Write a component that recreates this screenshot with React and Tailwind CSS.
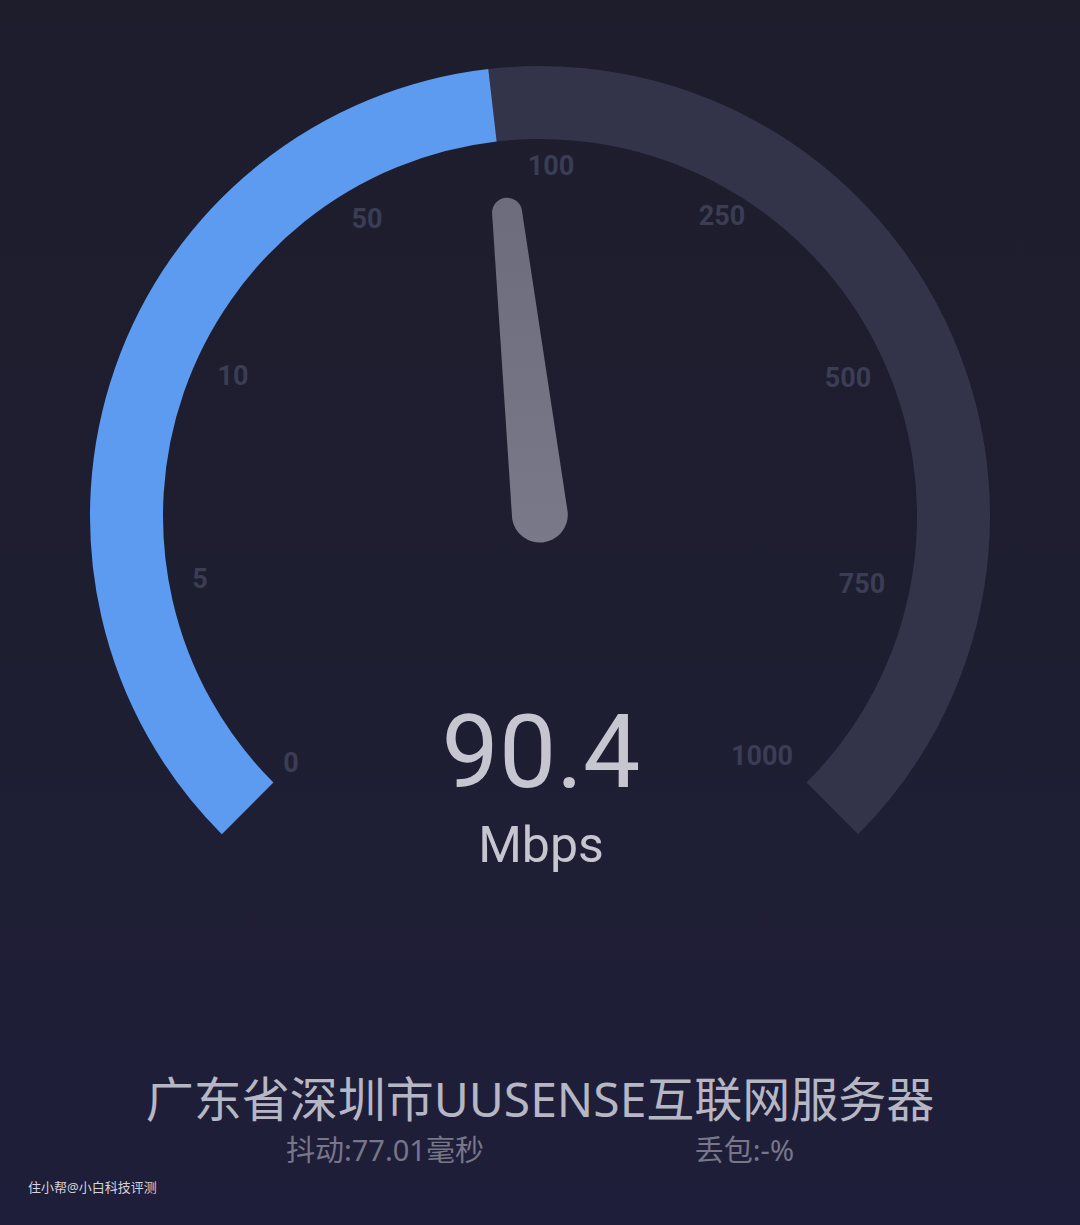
import React from 'react';

const CX = 540;
const CY = 516;
const R = 413.5;

// angle measured from 12 o'clock, clockwise, in degrees
const pt = (deg) => {
  const a = (deg * Math.PI) / 180;
  return [CX + R * Math.sin(a), CY - R * Math.cos(a)];
};

const arc = (from, to) => {
  const [x1, y1] = pt(from);
  const [x2, y2] = pt(to);
  const large = to - from > 180 ? 1 : 0;
  return `M${x1} ${y1} A${R} ${R} 0 ${large} 1 ${x2} ${y2}`;
};

const labels = [
  { t: '0', x: 291, y: 772 },
  { t: '5', x: 200, y: 588 },
  { t: '10', x: 233, y: 385 },
  { t: '50', x: 367, y: 228 },
  { t: '100', x: 551, y: 175 },
  { t: '250', x: 722, y: 225 },
  { t: '500', x: 848, y: 387 },
  { t: '750', x: 862, y: 593 },
  { t: '1000', x: 762, y: 765 },
];

function Gauge() {
  return (
    <svg width="1080" height="900" viewBox="0 0 1080 900" className="block">
      <defs>
        <linearGradient id="needle" x1="0" y1="0" x2="0" y2="1">
          <stop offset="0" stopColor="#6c6c7c" />
          <stop offset="1" stopColor="#797989" />
        </linearGradient>
      </defs>
      {/* track */}
      <path d={arc(-6.6, 135)} fill="none" stroke="#33344a" strokeWidth="73" />
      {/* progress */}
      <path d={arc(-135, -6.6)} fill="none" stroke="#5d9bf0" strokeWidth="73" />

      {labels.map((l) => (
        <text
          key={l.t}
          x={l.x}
          y={l.y}
          textAnchor="middle"
          fill="#3b3d54"
          fontSize="27"
          fontWeight="700"
          fontFamily="Roboto, 'Liberation Sans', sans-serif"
        >
          {l.t}
        </text>
      ))}

      {/* needle */}
      <path
        d="M567.8 513 L521.9 210.4 A15 15 0 0 0 492.1 213.6 L512.2 519 A28 28 0 0 0 567.8 513 Z"
        fill="url(#needle)"
      />

      <text
        x="541"
        y="787"
        textAnchor="middle"
        fill="#c6c6d0"
        fontSize="102"
        fontFamily="Roboto, 'Noto Sans', sans-serif"
      >
        90.4
      </text>
      <text
        x="541"
        y="862"
        textAnchor="middle"
        fill="#c6c6d0"
        fontSize="50"
        fontFamily="Roboto, 'Noto Sans', sans-serif"
      >
        Mbps
      </text>
    </svg>
  );
}

export default function App() {
  const cjk = { fontFamily: "'Noto Sans', 'Noto Sans CJK SC', sans-serif" };

  return (
    <div className="w-[1080px] h-[1225px] overflow-hidden flex flex-col bg-gradient-to-b from-[#1d1d2c] via-[#1e1e31] to-[#1f1e3a]">
      <Gauge />

      {/* server info */}
      <div className="flex flex-col items-center pt-[170px]" style={cjk}>
        <h2 className="text-[48px] leading-[58px] text-[#b6b6c4] whitespace-nowrap">
          广东省深圳市UUSENSE互联网服务器
        </h2>
        <div className="w-[508px] flex justify-between mt-[2px] text-[29px] leading-[40px] text-[#777789]">
          <span>抖动:77.01毫秒</span>
          <span>丢包:-%</span>
        </div>
      </div>

      {/* watermark */}
      <div className="pl-[28px] mt-[8px] text-[13px] leading-[18px] text-[#d4d4dc]" style={cjk}>
        住小帮@小白科技评测
      </div>
    </div>
  );
}
